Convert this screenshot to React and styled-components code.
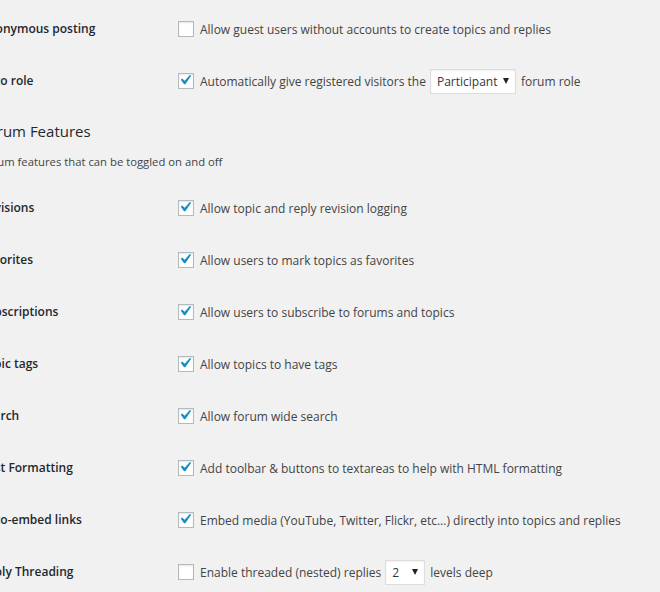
import styled, { createGlobalStyle } from "styled-components";

const GlobalStyle = createGlobalStyle`
  html, body {
    margin: 0;
    padding: 0;
    background: #f1f1f1;
    overflow: hidden;
  }
  body {
    font-family: "Open Sans", "Noto Sans", sans-serif;
    color: #444;
    font-size: 12px;
  }
`;

const Page = styled.div`
  margin-left: -20px;
  padding-top: 3px;
  width: 700px;
`;

const Row = styled.div`
  display: grid;
  grid-template-columns: 198px 1fr;
  align-items: center;
  height: 52px;
`;

const Label = styled.div`
  font-size: 12px;
  font-weight: 600;
  color: #23282d;
  margin-top: -1px;
`;

const Field = styled.label`
  display: flex;
  align-items: center;
  font-size: 12px;
  color: #444;
  white-space: nowrap;
`;

const Box = styled.span`
  position: relative;
  width: 14px;
  height: 14px;
  flex-shrink: 0;
  margin-right: 6px;
  border: 1px solid #b4b9be;
  background: #fff;
  box-shadow: inset 0 1px 2px rgba(0, 0, 0, 0.1);
  svg {
    position: absolute;
    left: -4px;
    top: -4px;
  }
`;

const Select = styled.span`
  display: inline-flex;
  align-items: center;
  justify-content: space-between;
  box-sizing: border-box;
  width: ${({ $width }) => $width}px;
  height: 25px;
  margin: 0 5px 0 4px;
  padding: 1px 6px 0 6px;
  background: #fff;
  border: 1px solid #ddd;
  box-shadow: inset 0 1px 2px rgba(0, 0, 0, 0.07);
  color: #32373c;
  font-size: 12px;
  &::after {
    content: "";
    margin-top: -2px;
    border-left: 3px solid transparent;
    border-right: 3px solid transparent;
    border-top: 6px solid #222;
  }
`;

const Heading = styled.h2`
  margin: 12px 0 0;
  font-size: 15px;
  line-height: 24px;
  font-weight: 400;
  color: #23282d;
`;

const Description = styled.p`
  margin: 10px 0 11px;
  font-size: 11.3px;
  line-height: 18px;
  color: #444;
`;

function Checkbox({ checked }) {
  return (
    <Box>
      {checked && (
        <svg width="20" height="20" viewBox="0 0 20 20">
          <path d="M14.83 4.89l1.34.94-5.81 8.38H9.02L5.78 9.67l1.34-1.25 2.57 2.4z" fill="#1e8cbe" />
        </svg>
      )}
    </Box>
  );
}

const features = [
  ["Revisions", true, "Allow topic and reply revision logging"],
  ["Favorites", true, "Allow users to mark topics as favorites"],
  ["Subscriptions", true, "Allow users to subscribe to forums and topics"],
  ["Topic tags", true, "Allow topics to have tags"],
  ["Search", true, "Allow forum wide search"],
  ["Post Formatting", true, "Add toolbar & buttons to textareas to help with HTML formatting"],
  ["Auto-embed links", true, "Embed media (YouTube, Twitter, Flickr, etc...) directly into topics and replies"],
];

export default function App() {
  return (
    <>
      <GlobalStyle />
      <Page>
        <Row>
          <Label>Anonymous posting</Label>
          <Field>
            <Checkbox />
            Allow guest users without accounts to create topics and replies
          </Field>
        </Row>
        <Row>
          <Label>Auto role</Label>
          <Field>
            <Checkbox checked />
            Automatically give registered visitors the
            <Select $width={86}>Participant</Select>
            forum role
          </Field>
        </Row>

        <Heading>Forum Features</Heading>
        <Description>Forum features that can be toggled on and off</Description>

        {features.map(([label, checked, text]) => (
          <Row key={label}>
            <Label>{label}</Label>
            <Field>
              <Checkbox checked={checked} />
              {text}
            </Field>
          </Row>
        ))}
        <Row>
          <Label>Reply Threading</Label>
          <Field>
            <Checkbox />
            Enable threaded (nested) replies
            <Select $width={40}>2</Select>
            levels deep
          </Field>
        </Row>
      </Page>
    </>
  );
}
